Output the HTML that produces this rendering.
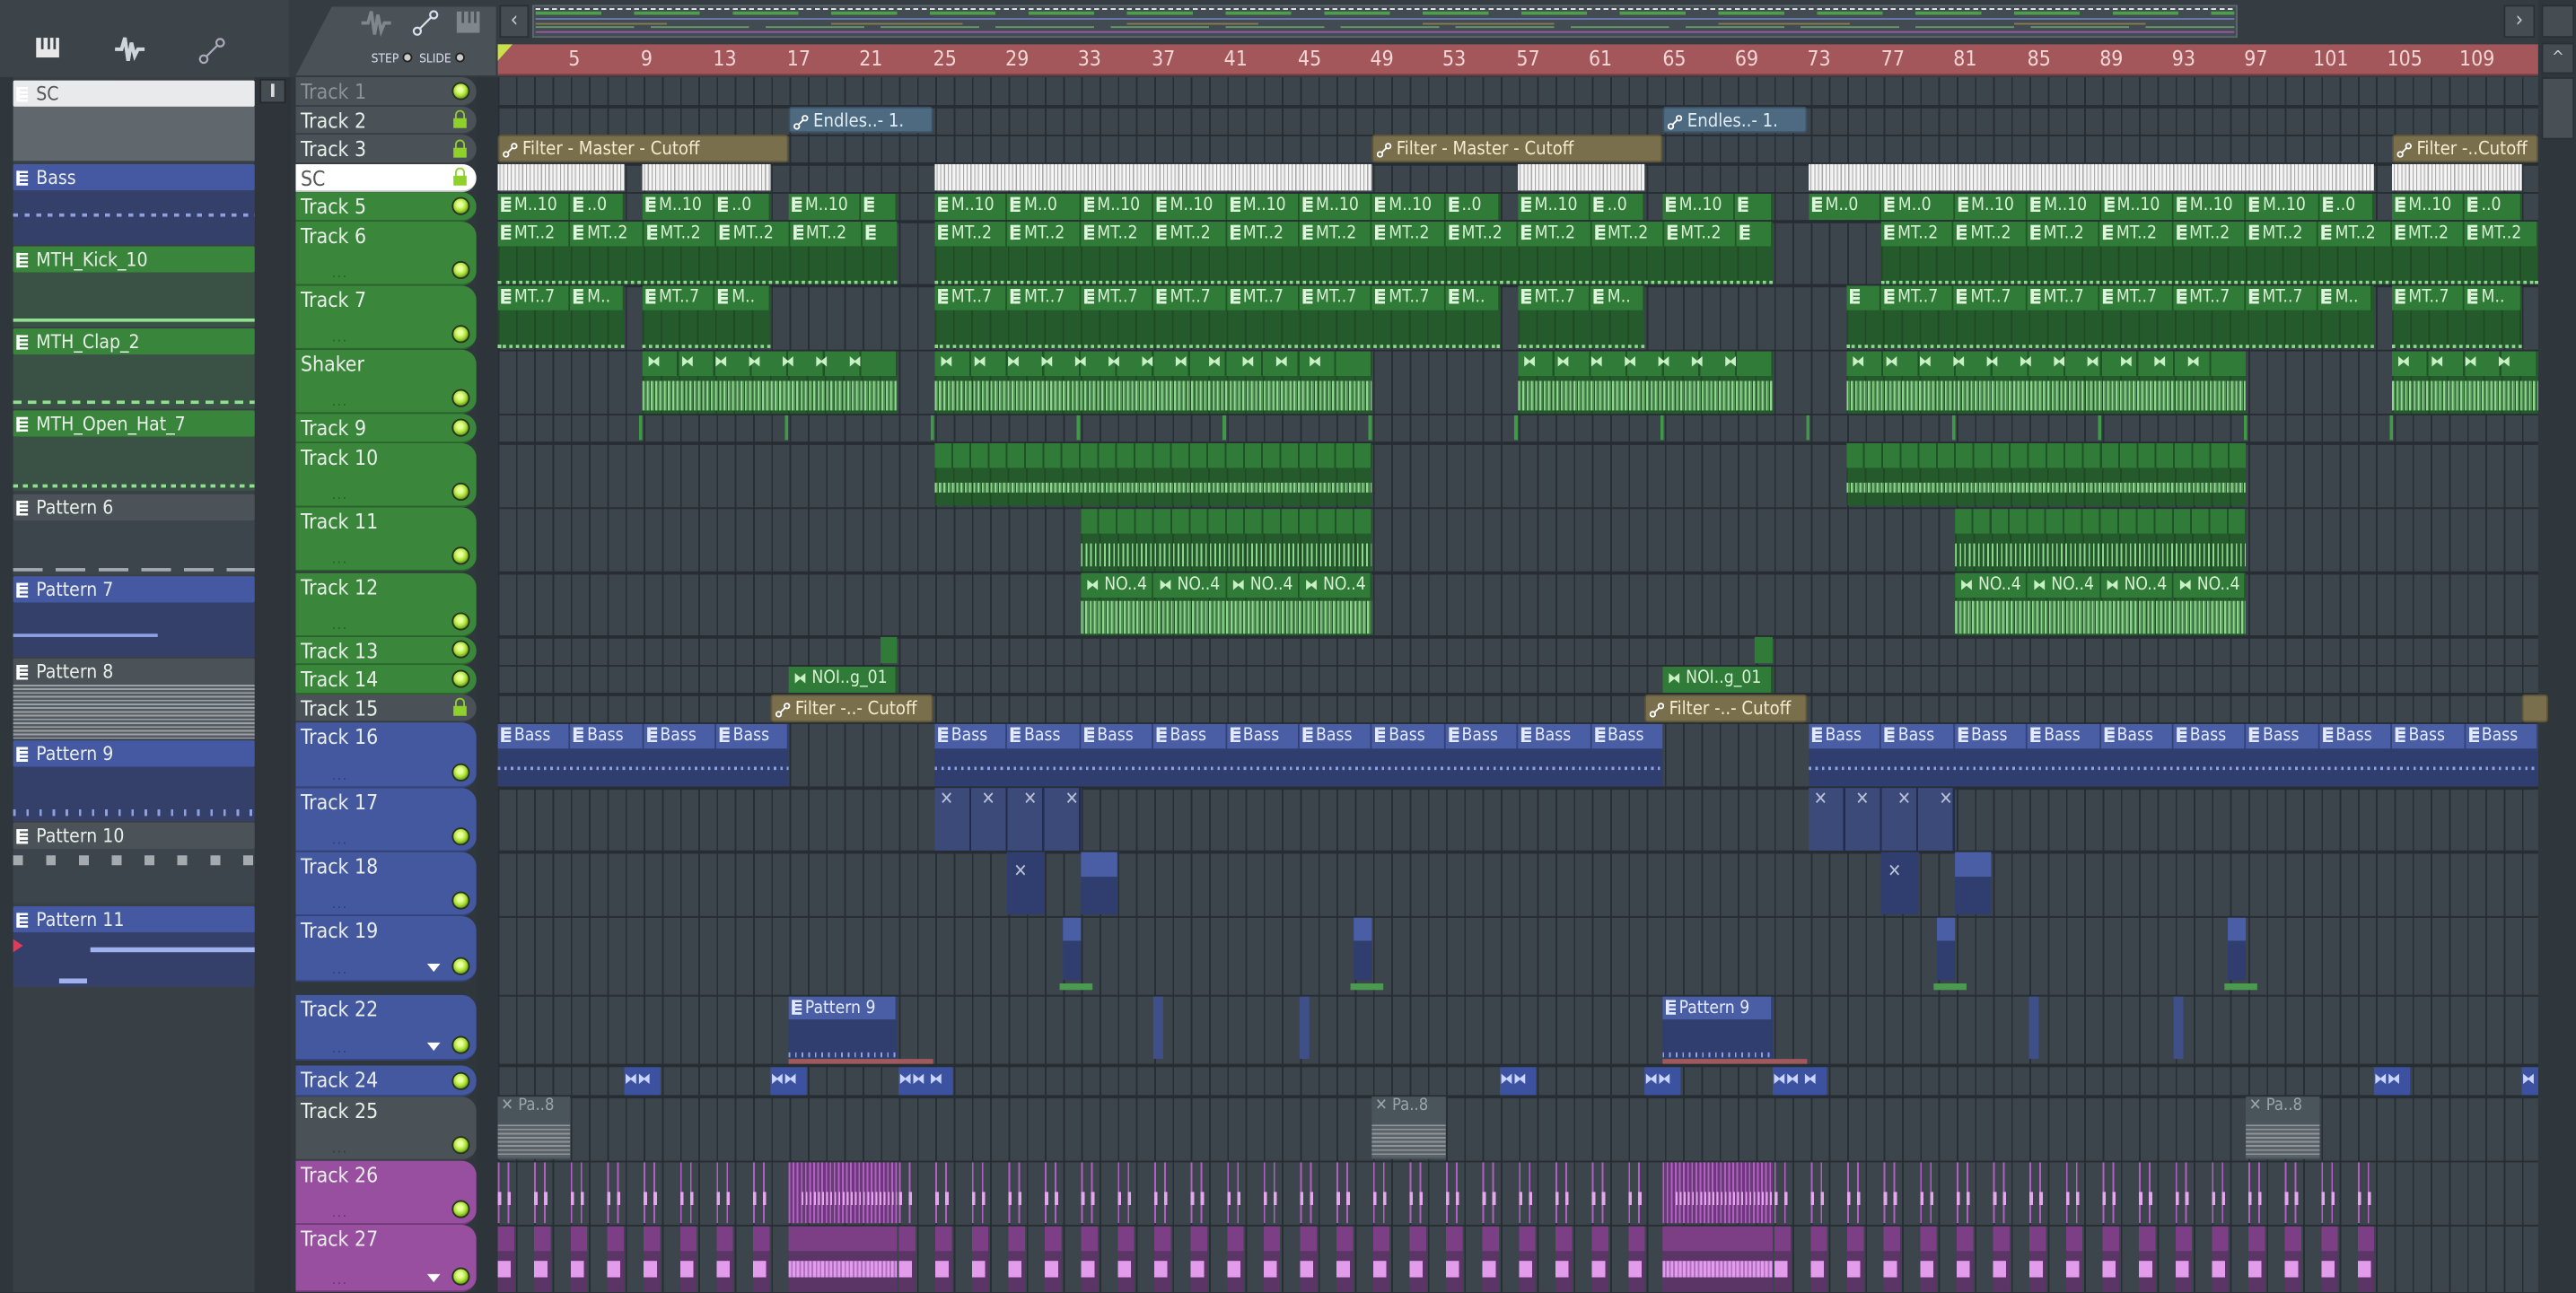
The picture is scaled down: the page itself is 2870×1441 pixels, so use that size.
<!DOCTYPE html>
<html><head><meta charset="utf-8"><style>
*{box-sizing:border-box;margin:0;padding:0}
html,body{width:2870px;height:1440px;overflow:hidden;background:#2b3237}
#s{position:absolute;left:0;top:0;width:1568px;height:787px;transform:scale(1.83036,1.8297);transform-origin:0 0;background:#353c42;font-family:"DejaVu Sans Condensed","Liberation Sans Narrow","Liberation Sans",sans-serif;color:#e9eee9}
.a{position:absolute}
.grid{left:303px;top:47px;width:1242px;height:740px;background:#3c444c;background-image:repeating-linear-gradient(90deg,#272e34 0 1px,transparent 1px 11.1px)}
.rl{position:absolute;left:303px;width:1242px;height:1.5px;background:#262d33}
.th{position:absolute;left:180px;width:110px;border-radius:0 9px 9px 0;font-size:12.5px;padding:1px 0 0 3px;line-height:15px;border-bottom:1px solid rgba(0,0,0,.25)}
.tg{background:#3a873c}.tb{background:#4458a0}.tp{background:#984fa0}.tx{background:#4a5258}
.led{position:absolute;right:4px;bottom:3px;width:11px;height:11px;border-radius:50%;background:radial-gradient(circle at 45% 40%,#e8ff9a 0 20%,#a9e234 50%,#5b8a18 80%);border:1.5px solid #2a3320}
.lock{position:absolute;right:6px;bottom:3px;width:8px;height:6px;background:#8fd12a}
.lock:before{content:"";position:absolute;left:1px;top:-5px;width:4px;height:5px;border:1.5px solid #8fd12a;border-bottom:none;border-radius:3px 3px 0 0}
.dots{position:absolute;left:22px;bottom:3px;font-size:8px;color:rgba(0,0,0,.35);letter-spacing:1px;line-height:6px}
.tri{position:absolute;right:22px;bottom:5px;width:0;height:0;border-left:4px solid transparent;border-right:4px solid transparent;border-top:5px solid #fff}
.run{position:absolute;display:flex;overflow:hidden}
.run>div{flex:none;overflow:hidden;white-space:nowrap;font-size:10.5px;line-height:15px;padding-left:1px;border-right:1px solid rgba(0,0,0,.3)}
.g>div{background:#2f7b37;color:#d7f0d4}
.bl>div{background:#4a5ea6;color:#e4eaff}
.ic{display:inline-block;width:6px;height:9px;margin:0 2px -1px 1px;background:repeating-linear-gradient(180deg,#dff5dc 0 1.5px,#2f7b37 1.5px 2.5px);border-left:2px solid #dff5dc}
.bl .ic{background:repeating-linear-gradient(180deg,#e4eaff 0 1.5px,#4a5ea6 1.5px 2.5px);border-left:2px solid #e4eaff}
.ar{display:inline-block;font-size:9px;color:#c9f0c4;margin-left:2px}
.body{position:absolute;overflow:hidden}
.gb{background:#245a2c;background-image:repeating-linear-gradient(90deg,rgba(0,0,0,.18) 0 1px,transparent 1px 11.1px)}
.wv{position:absolute;left:0;right:0;background:repeating-linear-gradient(90deg,#8fd68f 0 1px,rgba(143,214,143,.45) 1px 2px,transparent 2px 2.6px)}
.auto{position:absolute;border-radius:2px;font-size:11px;line-height:16px;white-space:nowrap;overflow:hidden;padding-left:14px}
.ol{background:#7a6f4c;color:#f5ecd0;border:1px solid #5e553a}
.sl{background:#4e6a80;color:#e0ecf4;border:1px solid #3b5266}
.knob{position:absolute;left:2px;top:4px;width:9px;height:9px}
.wh{position:absolute;background:#eee;background-image:repeating-linear-gradient(90deg,#f6f6f6 0 1px,#a9a9a9 1px 1.6px,#ececec 1.6px 2.3px)}
.lb{position:absolute;left:8px;width:147px;height:16px;font-size:11.5px;line-height:16px;padding-left:14px;border-radius:1px}
.lb:before{content:"";position:absolute;left:2px;top:4px;width:5px;height:9px;background:repeating-linear-gradient(180deg,#fff 0 1.5px,transparent 1.5px 2.5px);border-left:2px solid #fff}
.pv{position:absolute;left:8px;width:147px;height:33px}
.n{position:absolute;top:28px;font-size:12.5px;color:#f2d6d6}
.sh{position:absolute;height:15px;font-size:9px;line-height:15px;color:#c9f0c4;white-space:nowrap;overflow:hidden;letter-spacing:12.3px;padding-left:3px}
</style></head><body><div id="s">

<div class="a" style="left:0;top:0;width:178px;height:47px;background:#3c4349"></div>
<svg class="a" style="left:20px;top:20px" width="130" height="22" viewBox="0 0 130 22">
<rect x="2" y="3" width="14" height="12" fill="#e8e8e8"/><rect x="5" y="3" width="1.5" height="7" fill="#3c4349"/><rect x="9" y="3" width="1.5" height="7" fill="#3c4349"/><rect x="12.5" y="3" width="1.5" height="7" fill="#3c4349"/>
<path d="M50 10 L54 10 L56 3 L58 17 L60 6 L62 14 L64 10 L68 10" stroke="#cfd6da" stroke-width="2.2" fill="none"/>
<circle cx="104" cy="16" r="2.3" stroke="#aab" stroke-width="1.2" fill="none"/><circle cx="114" cy="6" r="2.3" stroke="#aab" stroke-width="1.2" fill="none"/><path d="M106 14 L112 8" stroke="#aab" stroke-width="1.2"/>
</svg>
<div class="a" style="left:176px;top:0;width:127px;height:47px;background:#353c42"></div>
<div class="a" style="left:180px;top:4px;width:122px;height:42px;background:#4a5258;clip-path:polygon(18% 0,100% 0,100% 100%,0 100%)"></div>
<svg class="a" style="left:218px;top:4px" width="80" height="20" viewBox="0 0 80 20">
<path d="M2 10 L6 10 L8 3 L10 17 L12 5 L14 15 L16 10 L20 10" stroke="#7f878c" stroke-width="2" fill="none"/>
<circle cx="36" cy="15" r="2.2" stroke="#dde" stroke-width="1.2" fill="none"/><circle cx="46" cy="5" r="2.2" stroke="#dde" stroke-width="1.2" fill="none"/><path d="M37.5 13.5 L44.5 6.5" stroke="#dde" stroke-width="1.2"/>
<rect x="60" y="3" width="14" height="13" fill="#7f878c"/><rect x="63" y="3" width="1.5" height="7" fill="#4a5258"/><rect x="67" y="3" width="1.5" height="7" fill="#4a5258"/><rect x="70.5" y="3" width="1.5" height="7" fill="#4a5258"/>
</svg>
<div class="a" style="left:226px;top:31px;font-size:7.5px;color:#dde">STEP <span style="display:inline-block;width:6px;height:6px;border-radius:50%;background:#ccc;border:1.5px solid #222"></span>&nbsp; SLIDE <span style="display:inline-block;width:6px;height:6px;border-radius:50%;background:#ccc;border:1.5px solid #222"></span></div>

<div class="a" style="left:303px;top:0;width:1242px;height:27px;background:#353c42"></div>
<div class="a" style="left:304px;top:3px;width:18px;height:20px;background:#454d53;border:1px solid #2a3035;color:#ccc;font-size:13px;text-align:center;line-height:18px">‹</div>
<div class="a" style="left:324px;top:3px;width:1038px;height:20px;background:#434b52;border:1px solid #5d676e"></div>
<div class="a" style="left:326px;top:5px;width:1034px;height:1px;background:repeating-linear-gradient(90deg,#eee 0 3px,transparent 3px 5px)"></div>
<div class="a" style="left:326px;top:7px;width:1034px;height:1.5px;background:repeating-linear-gradient(90deg,#4ca04c 0 40px,transparent 40px 60px)"></div>
<div class="a" style="left:326px;top:11px;width:1034px;height:1px;background:#6d7db5"></div>
<div class="a" style="left:326px;top:14px;width:1034px;height:1px;background:repeating-linear-gradient(90deg,#8a7a50 0 80px,transparent 80px 180px)"></div>
<div class="a" style="left:326px;top:16px;width:1034px;height:1px;background:repeating-linear-gradient(90deg,#6a9a6a 0 60px,transparent 60px 70px)"></div>
<div class="a" style="left:326px;top:19px;width:1034px;height:1px;background:#9a5aa6"></div>
<div class="a" style="left:1524px;top:3px;width:19px;height:20px;background:#454d53;border:1px solid #2a3035;color:#ccc;font-size:13px;text-align:center;line-height:18px">›</div>

<div class="a" style="left:303px;top:27px;width:1242px;height:19px;background:#a3575b;border-bottom:1px solid #7c3e42"></div>
<div class="a" style="left:303px;top:27px;width:0;height:0;border-left:9px solid #c8e04a;border-bottom:10px solid transparent"></div>
<div class="n" style="left:346px">5</div><div class="n" style="left:390px">9</div><div class="n" style="left:434px">13</div><div class="n" style="left:479px">17</div><div class="n" style="left:523px">21</div><div class="n" style="left:568px">25</div><div class="n" style="left:612px">29</div><div class="n" style="left:656px">33</div><div class="n" style="left:701px">37</div><div class="n" style="left:745px">41</div><div class="n" style="left:790px">45</div><div class="n" style="left:834px">49</div><div class="n" style="left:878px">53</div><div class="n" style="left:923px">57</div><div class="n" style="left:967px">61</div><div class="n" style="left:1012px">65</div><div class="n" style="left:1056px">69</div><div class="n" style="left:1100px">73</div><div class="n" style="left:1145px">77</div><div class="n" style="left:1189px">81</div><div class="n" style="left:1234px">85</div><div class="n" style="left:1278px">89</div><div class="n" style="left:1322px">93</div><div class="n" style="left:1366px">97</div><div class="n" style="left:1408px">101</div><div class="n" style="left:1453px">105</div><div class="n" style="left:1497px">109</div>

<div class="a" style="left:1545px;top:0;width:23px;height:787px;background:#30373c"></div>
<div class="a" style="left:1547px;top:3px;width:20px;height:20px;background:#454d53;border:1px solid #2a3035"></div>
<div class="a" style="left:1547px;top:26px;width:20px;height:19px;background:#454d53;border:1px solid #2a3035;color:#ccc;font-size:10px;text-align:center;line-height:18px">^</div>
<div class="a" style="left:1547px;top:47px;width:20px;height:38px;background:#485056;border:1px solid #2a3035"></div>

<div class="a" style="left:0;top:47px;width:8px;height:740px;background:#30373c"></div>
<div class="a" style="left:8px;top:47px;width:147px;height:740px;background:#383f45"></div>
<div class="a" style="left:155px;top:47px;width:22px;height:740px;background:#2e3439"></div>
<div class="a" style="left:158px;top:48px;width:16px;height:15px;background:#454d53;border:1px solid #22282c"></div>
<div class="a" style="left:165px;top:51px;width:2px;height:8px;background:#ddd"></div>

<div class="lb" style="top:49px;background:#e9eaeb;color:#555">SC</div>
<div class="pv" style="top:65px;background:#60676d"></div>
<div class="lb" style="top:100px;background:#4558a2">Bass</div>
<div class="pv" style="top:116px;background:#34406a;background-image:repeating-linear-gradient(90deg,#8ea0e0 0 3px,transparent 3px 7px);background-size:100% 2px;background-position:0 14px;background-repeat:repeat-x"></div>
<div class="lb" style="top:150px;background:#39853b">MTH_Kick_10</div>
<div class="pv" style="top:166px;background:#3a5145;background-image:linear-gradient(#8fe08f,#8fe08f);background-size:100% 2px;background-position:0 28px;background-repeat:no-repeat"></div>
<div class="lb" style="top:200px;background:#39853b">MTH_Clap_2</div>
<div class="pv" style="top:216px;background:#3a5145;background-image:repeating-linear-gradient(90deg,#8fe08f 0 5px,transparent 5px 9px);background-size:100% 2px;background-position:0 28px;background-repeat:no-repeat"></div>
<div class="lb" style="top:250px;background:#39853b">MTH_Open_Hat_7</div>
<div class="pv" style="top:266px;background:#3a5145;background-image:repeating-linear-gradient(90deg,#8fe08f 0 3px,transparent 3px 6px);background-size:100% 2px;background-position:0 29px;background-repeat:no-repeat"></div>
<div class="lb" style="top:301px;background:#4c5358">Pattern 6</div>
<div class="pv" style="top:317px;background:#3d454c;background-image:repeating-linear-gradient(90deg,#a4aaae 0 18px,transparent 18px 26px);background-size:100% 2px;background-position:0 29px;background-repeat:no-repeat"></div>
<div class="lb" style="top:351px;background:#4558a2">Pattern 7</div>
<div class="pv" style="top:367px;background:#34406a;background-image:linear-gradient(#8ea0e0,#8ea0e0);background-size:60% 2px;background-position:0 19px;background-repeat:no-repeat"></div>
<div class="lb" style="top:401px;background:#4c5358">Pattern 8</div>
<div class="pv" style="top:417px;background:repeating-linear-gradient(180deg,#9aa0a4 0 1px,#555c61 1px 2.3px)"></div>
<div class="lb" style="top:451px;background:#4558a2">Pattern 9</div>
<div class="pv" style="top:467px;background:#34406a;background-image:repeating-linear-gradient(90deg,#8ea0e0 0 1.5px,transparent 1.5px 8px);background-size:100% 4px;background-position:0 26px;background-repeat:no-repeat"></div>
<div class="lb" style="top:501px;background:#4c5358">Pattern 10</div>
<div class="pv" style="top:517px;background:#3d454c;background-image:repeating-linear-gradient(90deg,#a4aaae 0 6px,transparent 6px 20px);background-size:100% 6px;background-position:0 4px;background-repeat:no-repeat"></div>
<div class="lb" style="top:552px;background:#4558a2">Pattern 11</div>
<div class="pv" style="top:568px;background:#34406a"><div class="a" style="left:47px;top:9px;width:100px;height:3px;background:#9fb2ee"></div><div class="a" style="left:28px;top:28px;width:17px;height:3px;background:#9fb2ee"></div><div class="a" style="left:0;top:4px;width:0;height:0;border-left:6px solid #e03c5a;border-top:4px solid transparent;border-bottom:4px solid transparent"></div></div>

<div class="a" style="left:177px;top:47px;width:126px;height:740px;background:#30373c"></div>
<div class="a" style="left:290px;top:47px;width:13px;height:740px;background:#2e353a"></div>

<div class="a grid"></div>
<div class="rl" style="top:64px"></div><div class="rl" style="top:81.5px"></div><div class="rl" style="top:99px"></div><div class="rl" style="top:116.5px"></div><div class="rl" style="top:134px"></div><div class="rl" style="top:173.3px"></div><div class="rl" style="top:212.6px"></div><div class="rl" style="top:251.9px"></div><div class="rl" style="top:269.4px"></div><div class="rl" style="top:308.7px"></div><div class="rl" style="top:348px"></div><div class="rl" style="top:387.3px"></div><div class="rl" style="top:404.8px"></div><div class="rl" style="top:422.3px"></div><div class="rl" style="top:439.8px"></div><div class="rl" style="top:479.1px"></div><div class="rl" style="top:518.4px"></div><div class="rl" style="top:557.7px"></div><div class="rl" style="top:605.6px"></div><div class="rl" style="top:648.2px"></div><div class="rl" style="top:667.2px"></div><div class="rl" style="top:706.5px"></div><div class="rl" style="top:745.8px"></div>

<div class="th tx" style="top:47px;height:17.5px;color:#8c9397">Track 1<div class="led"></div></div>
<div class="th tx" style="top:64.5px;height:17.5px">Track 2<div class="lock"></div></div>
<div class="th tx" style="top:82px;height:17.5px">Track 3<div class="lock"></div></div>
<div class="th" style="top:99.5px;height:17.5px;background:#fff;color:#555">SC<div class="lock"></div></div>
<div class="th tg" style="top:117px;height:17.5px">Track 5<div class="led"></div></div>
<div class="th tg" style="top:134.5px;height:39.3px">Track 6<div class="dots">...</div><div class="led"></div></div>
<div class="th tg" style="top:173.8px;height:39.3px">Track 7<div class="dots">...</div><div class="led"></div></div>
<div class="th tg" style="top:213.1px;height:39.3px">Shaker<div class="dots">...</div><div class="led"></div></div>
<div class="th tg" style="top:252.4px;height:17.5px">Track 9<div class="led"></div></div>
<div class="th tg" style="top:269.9px;height:39.3px">Track 10<div class="dots">...</div><div class="led"></div></div>
<div class="th tg" style="top:309.2px;height:39.3px">Track 11<div class="dots">...</div><div class="led"></div></div>
<div class="th tg" style="top:348.5px;height:39.3px">Track 12<div class="dots">...</div><div class="led"></div></div>
<div class="th tg" style="top:387.8px;height:17.5px">Track 13<div class="led"></div></div>
<div class="th tg" style="top:405.3px;height:17.5px">Track 14<div class="led"></div></div>
<div class="th tx" style="top:422.8px;height:17.5px">Track 15<div class="lock"></div></div>
<div class="th tb" style="top:440.3px;height:39.3px">Track 16<div class="dots">...</div><div class="led"></div></div>
<div class="th tb" style="top:479.6px;height:39.3px">Track 17<div class="dots">...</div><div class="led"></div></div>
<div class="th tb" style="top:518.9px;height:39.3px">Track 18<div class="dots">...</div><div class="led"></div></div>
<div class="th tb" style="top:558.2px;height:40px">Track 19<div class="dots">...</div><div class="tri"></div><div class="led"></div></div>
<div class="th tb" style="top:606.1px;height:40px">Track 22<div class="dots">...</div><div class="tri"></div><div class="led"></div></div>
<div class="th tb" style="top:648.7px;height:19px">Track 24<div class="led"></div></div>
<div class="th tx" style="top:667.7px;height:39.3px">Track 25<div class="dots">...</div><div class="led"></div></div>
<div class="th tp" style="top:707px;height:39.3px">Track 26<div class="dots">...</div><div class="led"></div></div>
<div class="th tp" style="top:746.3px;height:41px">Track 27<div class="dots">...</div><div class="tri"></div><div class="led"></div></div>

<div class="auto sl" style="left:480px;top:64.5px;width:88px;height:16px">Endles..- 1.<svg class="knob" viewBox="0 0 9 9"><circle cx="2" cy="7" r="1.5" stroke="#fff" fill="none"/><circle cx="7" cy="2" r="1.5" stroke="#fff" fill="none"/><path d="M3 6L6 3" stroke="#fff"/></svg></div>
<div class="auto sl" style="left:1012px;top:64.5px;width:88px;height:16px">Endles..- 1.<svg class="knob" viewBox="0 0 9 9"><circle cx="2" cy="7" r="1.5" stroke="#fff" fill="none"/><circle cx="7" cy="2" r="1.5" stroke="#fff" fill="none"/><path d="M3 6L6 3" stroke="#fff"/></svg></div>
<div class="auto ol" style="left:303px;top:82px;width:177px;height:16.5px">Filter - Master - Cutoff<svg class="knob" viewBox="0 0 9 9"><circle cx="2" cy="7" r="1.5" stroke="#fff" fill="none"/><circle cx="7" cy="2" r="1.5" stroke="#fff" fill="none"/><path d="M3 6L6 3" stroke="#fff"/></svg></div>
<div class="auto ol" style="left:835px;top:82px;width:177px;height:16.5px">Filter - Master - Cutoff<svg class="knob" viewBox="0 0 9 9"><circle cx="2" cy="7" r="1.5" stroke="#fff" fill="none"/><circle cx="7" cy="2" r="1.5" stroke="#fff" fill="none"/><path d="M3 6L6 3" stroke="#fff"/></svg></div>
<div class="auto ol" style="left:1456px;top:82px;width:89px;height:16.5px">Filter -..Cutoff<svg class="knob" viewBox="0 0 9 9"><circle cx="2" cy="7" r="1.5" stroke="#fff" fill="none"/><circle cx="7" cy="2" r="1.5" stroke="#fff" fill="none"/><path d="M3 6L6 3" stroke="#fff"/></svg></div>
<div class="wh" style="left:303px;top:100px;width:77px;height:16px"></div>
<div class="wh" style="left:391px;top:100px;width:78px;height:16px"></div>
<div class="wh" style="left:569px;top:100px;width:266px;height:16px"></div>
<div class="wh" style="left:924px;top:100px;width:77px;height:16px"></div>
<div class="wh" style="left:1101px;top:100px;width:344px;height:16px"></div>
<div class="wh" style="left:1456px;top:100px;width:79px;height:16px"></div>

<div class="run g" style="left:303px;top:117.5px;width:77px;height:16px"><div style="width:44.4px"><i class="ic"></i>M..10</div><div style="width:33px"><i class="ic"></i>..0</div></div>
<div class="run g" style="left:391px;top:117.5px;width:78px;height:16px"><div style="width:44.4px"><i class="ic"></i>M..10</div><div style="width:34px"><i class="ic"></i>..0</div></div>
<div class="run g" style="left:480px;top:117.5px;width:66px;height:16px"><div style="width:44.4px"><i class="ic"></i>M..10</div><div style="width:22px"><i class="ic"></i></div></div>
<div class="run g" style="left:569px;top:117.5px;width:344px;height:16px"><div style="width:44.4px"><i class="ic"></i>M..10</div><div style="width:44.4px"><i class="ic"></i>M..0</div><div style="width:44.4px"><i class="ic"></i>M..10</div><div style="width:44.4px"><i class="ic"></i>M..10</div><div style="width:44.4px"><i class="ic"></i>M..10</div><div style="width:44.4px"><i class="ic"></i>M..10</div><div style="width:44.4px"><i class="ic"></i>M..10</div><div style="width:33px"><i class="ic"></i>..0</div></div>
<div class="run g" style="left:924px;top:117.5px;width:77px;height:16px"><div style="width:44.4px"><i class="ic"></i>M..10</div><div style="width:33px"><i class="ic"></i>..0</div></div>
<div class="run g" style="left:1012px;top:117.5px;width:67px;height:16px"><div style="width:44.4px"><i class="ic"></i>M..10</div><div style="width:23px"><i class="ic"></i></div></div>
<div class="run g" style="left:1101px;top:117.5px;width:344px;height:16px"><div style="width:44.4px"><i class="ic"></i>M..0</div><div style="width:44.4px"><i class="ic"></i>M..0</div><div style="width:44.4px"><i class="ic"></i>M..10</div><div style="width:44.4px"><i class="ic"></i>M..10</div><div style="width:44.4px"><i class="ic"></i>M..10</div><div style="width:44.4px"><i class="ic"></i>M..10</div><div style="width:44.4px"><i class="ic"></i>M..10</div><div style="width:33px"><i class="ic"></i>..0</div></div>
<div class="run g" style="left:1456px;top:117.5px;width:79px;height:16px"><div style="width:44.4px"><i class="ic"></i>M..10</div><div style="width:35px"><i class="ic"></i>..0</div></div>

<div class="body gb" style="left:303px;top:135px;width:243px;height:38px;border-bottom:2px dotted #8fd68f"></div>
<div class="body gb" style="left:569px;top:135px;width:510px;height:38px;border-bottom:2px dotted #8fd68f"></div>
<div class="body gb" style="left:1145px;top:135px;width:400px;height:38px;border-bottom:2px dotted #8fd68f"></div>
<div class="run g" style="left:303px;top:135px;width:243px;height:15px"><div style="width:44.4px"><i class="ic"></i>MT..2</div><div style="width:44.4px"><i class="ic"></i>MT..2</div><div style="width:44.4px"><i class="ic"></i>MT..2</div><div style="width:44.4px"><i class="ic"></i>MT..2</div><div style="width:44.4px"><i class="ic"></i>MT..2</div><div style="width:22px"><i class="ic"></i></div></div>
<div class="run g" style="left:569px;top:135px;width:510px;height:15px"><div style="width:44.4px"><i class="ic"></i>MT..2</div><div style="width:44.4px"><i class="ic"></i>MT..2</div><div style="width:44.4px"><i class="ic"></i>MT..2</div><div style="width:44.4px"><i class="ic"></i>MT..2</div><div style="width:44.4px"><i class="ic"></i>MT..2</div><div style="width:44.4px"><i class="ic"></i>MT..2</div><div style="width:44.4px"><i class="ic"></i>MT..2</div><div style="width:44.4px"><i class="ic"></i>MT..2</div><div style="width:44.4px"><i class="ic"></i>MT..2</div><div style="width:44.4px"><i class="ic"></i>MT..2</div><div style="width:44.4px"><i class="ic"></i>MT..2</div><div style="width:22px"><i class="ic"></i></div></div>
<div class="run g" style="left:1145px;top:135px;width:400px;height:15px"><div style="width:44.4px"><i class="ic"></i>MT..2</div><div style="width:44.4px"><i class="ic"></i>MT..2</div><div style="width:44.4px"><i class="ic"></i>MT..2</div><div style="width:44.4px"><i class="ic"></i>MT..2</div><div style="width:44.4px"><i class="ic"></i>MT..2</div><div style="width:44.4px"><i class="ic"></i>MT..2</div><div style="width:44.4px"><i class="ic"></i>MT..2</div><div style="width:44.4px"><i class="ic"></i>MT..2</div><div style="width:44.4px"><i class="ic"></i>MT..2</div><div style="width:44.4px"><i class="ic"></i>MT..2</div></div>

<div class="body gb" style="left:303px;top:174.3px;width:77px;height:38px;border-bottom:2px dotted #8fd68f"></div>
<div class="body gb" style="left:391px;top:174.3px;width:78px;height:38px;border-bottom:2px dotted #8fd68f"></div>
<div class="body gb" style="left:569px;top:174.3px;width:344px;height:38px;border-bottom:2px dotted #8fd68f"></div>
<div class="body gb" style="left:924px;top:174.3px;width:77px;height:38px;border-bottom:2px dotted #8fd68f"></div>
<div class="body gb" style="left:1124px;top:174.3px;width:321px;height:38px;border-bottom:2px dotted #8fd68f"></div>
<div class="body gb" style="left:1456px;top:174.3px;width:79px;height:38px;border-bottom:2px dotted #8fd68f"></div>
<div class="run g" style="left:303px;top:174.3px;width:77px;height:15px"><div style="width:44.4px"><i class="ic"></i>MT..7</div><div style="width:33px"><i class="ic"></i>M..</div></div>
<div class="run g" style="left:391px;top:174.3px;width:78px;height:15px"><div style="width:44.4px"><i class="ic"></i>MT..7</div><div style="width:34px"><i class="ic"></i>M..</div></div>
<div class="run g" style="left:569px;top:174.3px;width:344px;height:15px"><div style="width:44.4px"><i class="ic"></i>MT..7</div><div style="width:44.4px"><i class="ic"></i>MT..7</div><div style="width:44.4px"><i class="ic"></i>MT..7</div><div style="width:44.4px"><i class="ic"></i>MT..7</div><div style="width:44.4px"><i class="ic"></i>MT..7</div><div style="width:44.4px"><i class="ic"></i>MT..7</div><div style="width:44.4px"><i class="ic"></i>MT..7</div><div style="width:33px"><i class="ic"></i>M..</div></div>
<div class="run g" style="left:924px;top:174.3px;width:77px;height:15px"><div style="width:44.4px"><i class="ic"></i>MT..7</div><div style="width:33px"><i class="ic"></i>M..</div></div>
<div class="run g" style="left:1124px;top:174.3px;width:321px;height:15px"><div style="width:21px"><i class="ic"></i></div><div style="width:44.4px"><i class="ic"></i>MT..7</div><div style="width:44.4px"><i class="ic"></i>MT..7</div><div style="width:44.4px"><i class="ic"></i>MT..7</div><div style="width:44.4px"><i class="ic"></i>MT..7</div><div style="width:44.4px"><i class="ic"></i>MT..7</div><div style="width:44.4px"><i class="ic"></i>MT..7</div><div style="width:33px"><i class="ic"></i>M..</div></div>
<div class="run g" style="left:1456px;top:174.3px;width:79px;height:15px"><div style="width:44.4px"><i class="ic"></i>MT..7</div><div style="width:35px"><i class="ic"></i>M..</div></div>

<div class="body gb" style="left:391px;top:213.6px;width:155px;height:38px"><div class="wv" style="top:18px;bottom:2px"></div></div>
<div class="body gb" style="left:569px;top:213.6px;width:266px;height:38px"><div class="wv" style="top:18px;bottom:2px"></div></div>
<div class="body gb" style="left:924px;top:213.6px;width:155px;height:38px"><div class="wv" style="top:18px;bottom:2px"></div></div>
<div class="body gb" style="left:1124px;top:213.6px;width:243px;height:38px"><div class="wv" style="top:18px;bottom:2px"></div></div>
<div class="body gb" style="left:1456px;top:213.6px;width:89px;height:38px"><div class="wv" style="top:18px;bottom:2px"></div></div>
<div class="a" style="left:391px;top:213.6px;width:155px;height:15px;background:repeating-linear-gradient(90deg,#2f7b37 0 21px,#1f5226 21px 22.2px)"></div>
<div class="a" style="left:569px;top:213.6px;width:266px;height:15px;background:repeating-linear-gradient(90deg,#2f7b37 0 21px,#1f5226 21px 22.2px)"></div>
<div class="a" style="left:924px;top:213.6px;width:155px;height:15px;background:repeating-linear-gradient(90deg,#2f7b37 0 21px,#1f5226 21px 22.2px)"></div>
<div class="a" style="left:1124px;top:213.6px;width:243px;height:15px;background:repeating-linear-gradient(90deg,#2f7b37 0 21px,#1f5226 21px 22.2px)"></div>
<div class="a" style="left:1456px;top:213.6px;width:89px;height:15px;background:repeating-linear-gradient(90deg,#2f7b37 0 21px,#1f5226 21px 22.2px)"></div>
<div class="sh" style="left:391px;top:213.6px;width:155px">⧓⧓⧓⧓⧓⧓⧓</div>
<div class="sh" style="left:569px;top:213.6px;width:266px">⧓⧓⧓⧓⧓⧓⧓⧓⧓⧓⧓⧓</div>
<div class="sh" style="left:924px;top:213.6px;width:155px">⧓⧓⧓⧓⧓⧓⧓</div>
<div class="sh" style="left:1124px;top:213.6px;width:243px">⧓⧓⧓⧓⧓⧓⧓⧓⧓⧓⧓</div>
<div class="sh" style="left:1456px;top:213.6px;width:89px">⧓⧓⧓⧓</div>

<div class="a" style="left:389px;top:253px;width:1100px;height:15px;background:repeating-linear-gradient(90deg,#3e9a46 0 2px,transparent 2px 88.8px)"></div>

<div class="body gb" style="left:569px;top:270.4px;width:266px;height:38px"><div class="wv" style="top:24px;height:6px"></div></div>
<div class="body gb" style="left:1124px;top:270.4px;width:243px;height:38px"><div class="wv" style="top:24px;height:6px"></div></div>
<div class="a" style="left:569px;top:270.4px;width:266px;height:15px;background:repeating-linear-gradient(90deg,#2f7b37 0 10px,#1f5226 10px 11.1px)"></div>
<div class="a" style="left:1124px;top:270.4px;width:243px;height:15px;background:repeating-linear-gradient(90deg,#2f7b37 0 10px,#1f5226 10px 11.1px)"></div>
<div class="body gb" style="left:658px;top:309.7px;width:177px;height:38px"><div class="wv" style="top:21px;bottom:3px;background:repeating-linear-gradient(90deg,#8fd68f 0 1px,transparent 1px 2.8px)"></div></div>
<div class="body gb" style="left:1190px;top:309.7px;width:177px;height:38px"><div class="wv" style="top:21px;bottom:3px;background:repeating-linear-gradient(90deg,#8fd68f 0 1px,transparent 1px 2.8px)"></div></div>
<div class="a" style="left:658px;top:309.7px;width:177px;height:15px;background:repeating-linear-gradient(90deg,#2f7b37 0 10px,#1f5226 10px 11.1px)"></div>
<div class="a" style="left:1190px;top:309.7px;width:177px;height:15px;background:repeating-linear-gradient(90deg,#2f7b37 0 10px,#1f5226 10px 11.1px)"></div>
<div class="body gb" style="left:658px;top:349px;width:177px;height:38px"><div class="wv" style="top:17px;bottom:1px"></div></div>
<div class="body gb" style="left:1190px;top:349px;width:177px;height:38px"><div class="wv" style="top:17px;bottom:1px"></div></div>
<div class="run g" style="left:658px;top:349px;width:177px;height:15px"><div style="width:44.4px"><span class="ar">⧓</span> NO..4</div><div style="width:44.4px"><span class="ar">⧓</span> NO..4</div><div style="width:44.4px"><span class="ar">⧓</span> NO..4</div><div style="width:44px"><span class="ar">⧓</span> NO..4</div></div>
<div class="run g" style="left:1190px;top:349px;width:177px;height:15px"><div style="width:44.4px"><span class="ar">⧓</span> NO..4</div><div style="width:44.4px"><span class="ar">⧓</span> NO..4</div><div style="width:44.4px"><span class="ar">⧓</span> NO..4</div><div style="width:44px"><span class="ar">⧓</span> NO..4</div></div>
<div class="a" style="left:536px;top:388.3px;width:10px;height:16px;background:#2f7b37"></div>
<div class="a" style="left:1068px;top:388.3px;width:11px;height:16px;background:#2f7b37"></div>
<div class="run g" style="left:480px;top:405.8px;width:66px;height:16px"><div style="width:66px"><span class="ar">⧓</span> NOI..g_01</div></div>
<div class="run g" style="left:1012px;top:405.8px;width:67px;height:16px"><div style="width:67px"><span class="ar">⧓</span> NOI..g_01</div></div>
<div class="auto ol" style="left:469px;top:423px;width:99px;height:16.5px">Filter -..- Cutoff<svg class="knob" viewBox="0 0 9 9"><circle cx="2" cy="7" r="1.5" stroke="#fff" fill="none"/><circle cx="7" cy="2" r="1.5" stroke="#fff" fill="none"/><path d="M3 6L6 3" stroke="#fff"/></svg></div>
<div class="auto ol" style="left:1001px;top:423px;width:99px;height:16.5px">Filter -..- Cutoff<svg class="knob" viewBox="0 0 9 9"><circle cx="2" cy="7" r="1.5" stroke="#fff" fill="none"/><circle cx="7" cy="2" r="1.5" stroke="#fff" fill="none"/><path d="M3 6L6 3" stroke="#fff"/></svg></div>
<div class="auto ol" style="left:1535px;top:423px;width:10px;height:16.5px"></div>

<div class="body" style="left:303px;top:440.8px;width:177px;height:38px;background:#2f3e6e;background-image:repeating-linear-gradient(90deg,#8ea0e0 0 1.5px,transparent 1.5px 4px);background-size:100% 2px;background-position:0 26px;background-repeat:repeat-x"></div>
<div class="body" style="left:569px;top:440.8px;width:443px;height:38px;background:#2f3e6e;background-image:repeating-linear-gradient(90deg,#8ea0e0 0 1.5px,transparent 1.5px 4px);background-size:100% 2px;background-position:0 26px;background-repeat:repeat-x"></div>
<div class="body" style="left:1101px;top:440.8px;width:444px;height:38px;background:#2f3e6e;background-image:repeating-linear-gradient(90deg,#8ea0e0 0 1.5px,transparent 1.5px 4px);background-size:100% 2px;background-position:0 26px;background-repeat:repeat-x"></div>
<div class="run bl" style="left:303px;top:440.8px;width:177px;height:15px"><div style="width:44.4px"><i class="ic"></i>Bass</div><div style="width:44.4px"><i class="ic"></i>Bass</div><div style="width:44.4px"><i class="ic"></i>Bass</div><div style="width:44px"><i class="ic"></i>Bass</div></div>
<div class="run bl" style="left:569px;top:440.8px;width:443px;height:15px"><div style="width:44.4px"><i class="ic"></i>Bass</div><div style="width:44.4px"><i class="ic"></i>Bass</div><div style="width:44.4px"><i class="ic"></i>Bass</div><div style="width:44.4px"><i class="ic"></i>Bass</div><div style="width:44.4px"><i class="ic"></i>Bass</div><div style="width:44.4px"><i class="ic"></i>Bass</div><div style="width:44.4px"><i class="ic"></i>Bass</div><div style="width:44.4px"><i class="ic"></i>Bass</div><div style="width:44.4px"><i class="ic"></i>Bass</div><div style="width:44px"><i class="ic"></i>Bass</div></div>
<div class="run bl" style="left:1101px;top:440.8px;width:444px;height:15px"><div style="width:44.4px"><i class="ic"></i>Bass</div><div style="width:44.4px"><i class="ic"></i>Bass</div><div style="width:44.4px"><i class="ic"></i>Bass</div><div style="width:44.4px"><i class="ic"></i>Bass</div><div style="width:44.4px"><i class="ic"></i>Bass</div><div style="width:44.4px"><i class="ic"></i>Bass</div><div style="width:44.4px"><i class="ic"></i>Bass</div><div style="width:44.4px"><i class="ic"></i>Bass</div><div style="width:44.4px"><i class="ic"></i>Bass</div><div style="width:44.4px"><i class="ic"></i>Bass</div></div>

<div class="a" style="left:569px;top:480px;width:89px;height:38px;background:#2f3e6e;background-image:repeating-linear-gradient(90deg,#3c4a7a 0 21px,#222c50 21px 22.2px)"></div>
<div class="a" style="left:1101px;top:480px;width:89px;height:38px;background:#2f3e6e;background-image:repeating-linear-gradient(90deg,#3c4a7a 0 21px,#222c50 21px 22.2px)"></div>
<div class="a" style="left:572px;top:480px;font-size:11px;color:#b8c0d8;word-spacing:14px">✕ ✕ ✕ ✕</div>
<div class="a" style="left:1104px;top:480px;font-size:11px;color:#b8c0d8;word-spacing:14px">✕ ✕ ✕ ✕</div>
<div class="a" style="left:613px;top:519.4px;width:23px;height:38px;background:#2f3e6e"><span style="font-size:11px;color:#b8c0d8;margin-left:4px">✕</span></div>
<div class="a" style="left:658px;top:519.4px;width:22px;height:38px;background:#2f3e6e;border-top:15px solid #4a5ea6"></div>
<div class="a" style="left:1145px;top:519.4px;width:23px;height:38px;background:#2f3e6e"><span style="font-size:11px;color:#b8c0d8;margin-left:4px">✕</span></div>
<div class="a" style="left:1190px;top:519.4px;width:22px;height:38px;background:#2f3e6e;border-top:15px solid #4a5ea6"></div>
<div class="a" style="left:647px;top:559px;width:11px;height:38px;background:#2f3e6e;border-top:14px solid #4a5ea6"></div>
<div class="a" style="left:824px;top:559px;width:11px;height:38px;background:#2f3e6e;border-top:14px solid #4a5ea6"></div>
<div class="a" style="left:1179px;top:559px;width:11px;height:38px;background:#2f3e6e;border-top:14px solid #4a5ea6"></div>
<div class="a" style="left:1356px;top:559px;width:11px;height:38px;background:#2f3e6e;border-top:14px solid #4a5ea6"></div>
<div class="a" style="left:645px;top:599px;width:20px;height:4px;background:#4a9a50"></div>
<div class="a" style="left:822px;top:599px;width:20px;height:4px;background:#4a9a50"></div>
<div class="a" style="left:1177px;top:599px;width:20px;height:4px;background:#4a9a50"></div>
<div class="a" style="left:1354px;top:599px;width:20px;height:4px;background:#4a9a50"></div>
<div class="a" style="left:480px;top:607px;width:66px;height:38px;background:#2f3e6e;background-image:repeating-linear-gradient(90deg,#8ea0e0 0 1px,transparent 1px 4px);background-size:100% 3px;background-position:0 34px;background-repeat:repeat-x"></div>
<div class="run bl" style="left:480px;top:607px;width:66px;height:14px"><div style="width:66px"><i class="ic"></i>Pattern 9</div></div>
<div class="a" style="left:480px;top:645px;width:88px;height:3px;background:#a05a5e"></div>
<div class="a" style="left:1012px;top:607px;width:67px;height:38px;background:#2f3e6e;background-image:repeating-linear-gradient(90deg,#8ea0e0 0 1px,transparent 1px 4px);background-size:100% 3px;background-position:0 34px;background-repeat:repeat-x"></div>
<div class="run bl" style="left:1012px;top:607px;width:67px;height:14px"><div style="width:67px"><i class="ic"></i>Pattern 9</div></div>
<div class="a" style="left:1012px;top:645px;width:88px;height:3px;background:#a05a5e"></div>
<div class="a" style="left:702px;top:607px;width:6px;height:38px;background:#3f4f88"></div>
<div class="a" style="left:791px;top:607px;width:6px;height:38px;background:#3f4f88"></div>
<div class="a" style="left:1235px;top:607px;width:6px;height:38px;background:#3f4f88"></div>
<div class="a" style="left:1323px;top:607px;width:6px;height:38px;background:#3f4f88"></div>
<div class="a" style="left:380px;top:650px;width:22px;height:17px;background:#3c52a0;color:#c8d4ff;font-size:9px;line-height:17px">⧓⧓</div>
<div class="a" style="left:469px;top:650px;width:22px;height:17px;background:#3c52a0;color:#c8d4ff;font-size:9px;line-height:17px">⧓⧓</div>
<div class="a" style="left:547px;top:650px;width:33px;height:17px;background:#3c52a0;color:#c8d4ff;font-size:9px;line-height:17px">⧓⧓ ⧓</div>
<div class="a" style="left:913px;top:650px;width:22px;height:17px;background:#3c52a0;color:#c8d4ff;font-size:9px;line-height:17px">⧓⧓</div>
<div class="a" style="left:1001px;top:650px;width:22px;height:17px;background:#3c52a0;color:#c8d4ff;font-size:9px;line-height:17px">⧓⧓</div>
<div class="a" style="left:1079px;top:650px;width:33px;height:17px;background:#3c52a0;color:#c8d4ff;font-size:9px;line-height:17px">⧓⧓ ⧓</div>
<div class="a" style="left:1445px;top:650px;width:22px;height:17px;background:#3c52a0;color:#c8d4ff;font-size:9px;line-height:17px">⧓⧓</div>
<div class="a" style="left:1535px;top:650px;width:10px;height:17px;background:#3c52a0;color:#c8d4ff;font-size:9px;line-height:17px">⧓</div>
<div class="a" style="left:303px;top:668px;width:44px;height:38px;background:#4d565d;border-top:15px solid #4a545b;font-size:10px;color:#9aa4aa"><div class="a" style="top:-15px;left:2px">✕ Pa..8</div><div class="a" style="left:0;top:2px;width:44px;height:20px;background:repeating-linear-gradient(180deg,#8c959b 0 1px,#5a6268 1px 2.5px)"></div></div>
<div class="a" style="left:835px;top:668px;width:45px;height:38px;background:#4d565d;border-top:15px solid #4a545b;font-size:10px;color:#9aa4aa"><div class="a" style="top:-15px;left:2px">✕ Pa..8</div><div class="a" style="left:0;top:2px;width:45px;height:20px;background:repeating-linear-gradient(180deg,#8c959b 0 1px,#5a6268 1px 2.5px)"></div></div>
<div class="a" style="left:1367px;top:668px;width:45px;height:38px;background:#4d565d;border-top:15px solid #4a545b;font-size:10px;color:#9aa4aa"><div class="a" style="top:-15px;left:2px">✕ Pa..8</div><div class="a" style="left:0;top:2px;width:45px;height:20px;background:repeating-linear-gradient(180deg,#8c959b 0 1px,#5a6268 1px 2.5px)"></div></div>
<div class="a" style="left:303px;top:708px;width:1142px;height:37px;background:repeating-linear-gradient(90deg,#b060c0 0 1px,transparent 1px 6px,#b060c0 6px 7px,transparent 7px 22.2px)"></div>
<div class="a" style="left:303px;top:726px;width:1142px;height:8px;background:repeating-linear-gradient(90deg,#e6a6ee 0 2px,transparent 2px 6px,#e6a6ee 6px 8px,transparent 8px 22.2px)"></div>
<div class="a" style="left:480px;top:708px;width:66px;height:37px;background:#6a3a78;background-image:repeating-linear-gradient(90deg,#b060c0 0 1px,transparent 1px 2.5px)"></div>
<div class="a" style="left:488px;top:726px;width:58px;height:8px;background:repeating-linear-gradient(90deg,#e6a6ee 0 1px,transparent 1px 2.5px)"></div>
<div class="a" style="left:1012px;top:708px;width:67px;height:37px;background:#6a3a78;background-image:repeating-linear-gradient(90deg,#b060c0 0 1px,transparent 1px 2.5px)"></div>
<div class="a" style="left:1020px;top:726px;width:59px;height:8px;background:repeating-linear-gradient(90deg,#e6a6ee 0 1px,transparent 1px 2.5px)"></div>
<div class="a" style="left:303px;top:747px;width:1142px;height:40px;background:repeating-linear-gradient(90deg,#5a3566 0 10px,transparent 10px 22.2px)"></div>
<div class="a" style="left:303px;top:747px;width:1142px;height:15px;background:repeating-linear-gradient(90deg,#7c3f86 0 10px,transparent 10px 22.2px)"></div>
<div class="a" style="left:303px;top:768px;width:1142px;height:10px;background:repeating-linear-gradient(90deg,#e39cec 0 8px,transparent 8px 22.2px)"></div>
<div class="a" style="left:480px;top:747px;width:66px;height:40px;background:#5a3566;border-top:15px solid #7c3f86"></div>
<div class="a" style="left:480px;top:768px;width:66px;height:10px;background:repeating-linear-gradient(90deg,#e39cec 0 1.5px,#b070c0 1.5px 2.5px)"></div>
<div class="a" style="left:1012px;top:747px;width:67px;height:40px;background:#5a3566;border-top:15px solid #7c3f86"></div>
<div class="a" style="left:1012px;top:768px;width:67px;height:10px;background:repeating-linear-gradient(90deg,#e39cec 0 1.5px,#b070c0 1.5px 2.5px)"></div>
</div></body></html>
